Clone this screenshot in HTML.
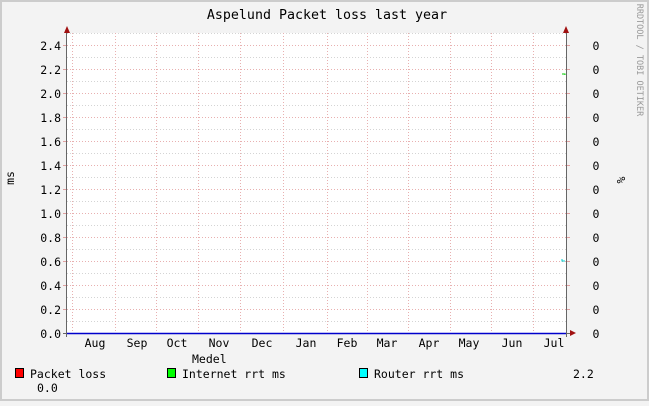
<!DOCTYPE html>
<html><head><style>body{margin:0;width:649px;height:401px;overflow:hidden;background:#f3f3f3}</style></head><body>
<svg width="649" height="401" xmlns="http://www.w3.org/2000/svg" font-family="DejaVu Sans Mono, Liberation Mono, monospace" font-size="11.5" fill="#000">
<rect x="0" y="0" width="649" height="401" fill="#cccccc"/>
<rect x="2" y="2" width="645" height="397" fill="#f3f3f3"/>
<rect x="67" y="33" width="499" height="300" fill="#fff"/>
<g stroke-width="1" stroke-dasharray="1,2" shape-rendering="crispEdges">
<g stroke="#d4d4d4">
<path d="M67 321.5H566M67 297.5H566M67 273.5H566M67 249.5H566M67 225.5H566M67 201.5H566M67 177.5H566M67 153.5H566M67 129.5H566M67 105.5H566M67 81.5H566M67 57.5H566M67 33.5H566"/>
</g>
<g stroke="#e8b0b0">
<path d="M67 309.5H566M67 285.5H566M67 261.5H566M67 237.5H566M67 213.5H566M67 189.5H566M67 165.5H566M67 141.5H566M67 117.5H566M67 93.5H566M67 69.5H566M67 45.5H566"/>
<path d="M72.5 33V333M115.5 33V333M156.5 33V333M198.5 33V333M240.5 33V333M283.5 33V333M327.5 33V333M367.5 33V333M408.5 33V333M450.5 33V333M491.5 33V333M533.5 33V333"/>
</g>
</g>
<g stroke="#e0a0a0" shape-rendering="crispEdges">
<path d="M63 333.5H67M63 309.5H67M63 285.5H67M63 261.5H67M63 237.5H67M63 213.5H67M63 189.5H67M63 165.5H67M63 141.5H67M63 117.5H67M63 93.5H67M63 69.5H67M63 45.5H67"/>
<path d="M566 309.5H570M566 285.5H570M566 261.5H570M566 237.5H570M566 213.5H570M566 189.5H570M566 165.5H570M566 141.5H570M566 117.5H570M566 93.5H570M566 69.5H570M566 45.5H570"/>
</g>
<g stroke="#666" shape-rendering="crispEdges">
<path d="M66.5 30V337M566.5 30V337M63 333.5H570"/>
</g>
<path d="M67 333.5H566" stroke="#0000cc" stroke-width="1.5"/>
<g fill="#a01010">
<polygon points="64,33 70,33 67,26"/>
<polygon points="563,33 569,33 566,26"/>
<polygon points="570,330 570,336 576,333"/>
</g>
<path d="M562 74H565V75" stroke="#00cc00" fill="none"/>
<path d="M562 259V261H565" stroke="#00cccc" fill="none"/>
<text x="327" y="19" text-anchor="middle" font-size="13.3">Aspelund Packet loss last year</text>
<g text-anchor="end">
<text x="61" y="338">0.0</text><text x="61" y="314">0.2</text><text x="61" y="290">0.4</text><text x="61" y="266">0.6</text><text x="61" y="242">0.8</text><text x="61" y="218">1.0</text><text x="61" y="194">1.2</text><text x="61" y="170">1.4</text><text x="61" y="146">1.6</text><text x="61" y="122">1.8</text><text x="61" y="98">2.0</text><text x="61" y="74">2.2</text><text x="61" y="50">2.4</text>
</g>
<g text-anchor="middle">
<text x="596" y="338">0</text><text x="596" y="314">0</text><text x="596" y="290">0</text><text x="596" y="266">0</text><text x="596" y="242">0</text><text x="596" y="218">0</text><text x="596" y="194">0</text><text x="596" y="170">0</text><text x="596" y="146">0</text><text x="596" y="122">0</text><text x="596" y="98">0</text><text x="596" y="74">0</text><text x="596" y="50">0</text>
<text x="95" y="347">Aug</text><text x="137" y="347">Sep</text><text x="177" y="347">Oct</text><text x="219" y="347">Nov</text><text x="262" y="347">Dec</text><text x="306" y="347">Jan</text><text x="347" y="347">Feb</text><text x="387" y="347">Mar</text><text x="429" y="347">Apr</text><text x="469" y="347">May</text><text x="512" y="347">Jun</text><text x="554" y="347">Jul</text>
</g>
<text transform="translate(14,178) rotate(-90)" text-anchor="middle">ms</text>
<text transform="translate(625,180) rotate(-90)" text-anchor="middle">%</text>
<text transform="translate(637,60) rotate(90)" text-anchor="middle" font-size="8.5" fill="#999">RRDTOOL / TOBI OETIKER</text>
<text x="192" y="363">Medel</text>
<rect x="15.5" y="368.5" width="8" height="9" fill="#ff0000" stroke="#000"/>
<text x="30" y="378">Packet loss</text>
<rect x="167.5" y="368.5" width="8" height="9" fill="#00ff00" stroke="#000"/>
<text x="182" y="378">Internet rrt ms</text>
<rect x="359.5" y="368.5" width="8" height="9" fill="#00ffff" stroke="#000"/>
<text x="374" y="378">Router rrt ms</text>
<text x="573" y="378">2.2</text>
<text x="37" y="392">0.0</text>
</svg>
</body></html>
